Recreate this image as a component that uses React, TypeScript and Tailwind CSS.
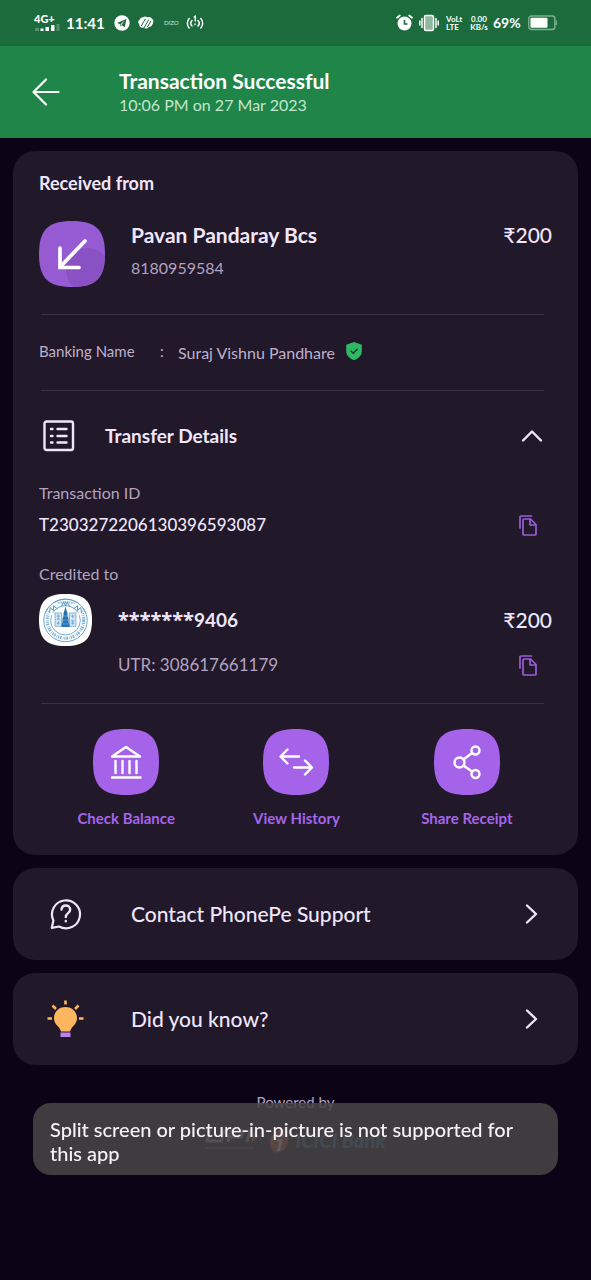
import { useState } from "react";
import type { ReactNode } from "react";

const stroke = {
  fill: "none",
  stroke: "currentColor",
  strokeLinecap: "round",
  strokeLinejoin: "round",
} as const;

const SQUIRCLE = "M33 0C57 0 66 9 66 33S57 66 33 66 0 57 0 33 9 0 33 0Z";

function StatusBar() {
  return (
    <div className="flex h-[46px] items-center justify-between bg-[#1b6b3c] pl-[34px] pr-[34px] text-white">
      <div className="flex items-center">
        <div className="flex w-8 flex-col">
          <span className="text-[11px] font-black leading-[10px]">4G+</span>
          <svg width="27" height="8" viewBox="0 0 27 8" fill="currentColor" aria-hidden="true">
            <path d="M1 4h4v3H1zM22.500 0h3v7h-3z" opacity=".25" />
            <path d="M6.500 4.500h3V7h-3zM11.500 3h3.500V7h-3.500zM17 1h3.500V7H17z" />
          </svg>
        </div>
        <span className="w-12 text-[15px] font-bold leading-6">11:41</span>
        <svg width="16" height="16" viewBox="0 0 16 16" aria-hidden="true">
          <circle cx="8" cy="8" r="7.700" fill="#fff" />
          <path d="M3 8 12.300 4.100 10.800 12.300 7.900 10.200 6.500 11.600 6.300 9.200Z" fill="#1b6b3c" />
          <path d="m6.500 9.200 4-3.500-3 4.200Z" fill="#fff" />
        </svg>
        <svg className="ml-2" width="16" height="14" viewBox="0 0 16 14" aria-hidden="true">
          <path
            d="M5 1.300c1.600-1.200 3.300-.8 4 .2 1.800-.9 4-.5 5 1.300 1.600.6 1.600 2.900 1 4-.5 2.600-1.900 4.200-4.100 4.200-1.500 2-4.200 1.900-5.300.6C3.200 12.300.900 11 1.500 8.500-.4 7 0 4.500 1.600 4 2 2.300 3.500 1.200 5 1.300Z"
            fill="#fff"
          />
          <path d="m3.500 9.500 3.700-6.300M6 12 10.500 4M9.500 11l3.300-5.800" stroke="#1b6b3c" strokeWidth="1" strokeLinecap="round" />
        </svg>
        <span className="ml-2.5 w-[22px] text-[6px] leading-3 opacity-80">DIZO</span>
        <svg width="18" height="16" viewBox="0 0 18 16" aria-hidden="true" {...stroke} strokeWidth="1.500">
          <path d="M3.200 3.500a7 7 0 0 0 0 9.500M14.800 3.500a7 7 0 0 1 0 9.500M6 5.500a4 4 0 0 0 0 5.500M12 5.500a4 4 0 0 1 0 5.500M8.300 2 9.300 1v5M9 9v.5" />
        </svg>
      </div>
      <div className="flex items-center">
        <svg width="17" height="18" viewBox="0 0 17 18" aria-hidden="true">
          <circle cx="8.500" cy="9.500" r="7" fill="#fff" />
          <path d="M1 3.800 3.800 1.500M16 3.800l-2.800-2.300" stroke="#fff" strokeWidth="1.800" strokeLinecap="round" />
          <path d="M8.500 5.800v4.200h3" fill="none" stroke="#1b6b3c" strokeWidth="1.600" />
        </svg>
        <svg className="ml-1.5" width="20" height="18" viewBox="0 0 20 18" aria-hidden="true" {...stroke} strokeWidth="1.500">
          <rect x="5.500" y="1.500" width="9" height="15" rx="1.500" fill="#8fb99e" />
          <path d="M3 4.500v9M17 4.500v9M.8 7v4M19.200 7v4" />
        </svg>
        <span className="ml-[7px] flex w-5 flex-col text-[8px] font-bold leading-[8px]">
          <span>VoLt</span>
          <span>LTE</span>
        </span>
        <span className="ml-0.5 flex w-[22px] flex-col text-center text-[8px] font-bold leading-[8px]">
          <span>0.00</span>
          <span>KB/s</span>
        </span>
        <span className="ml-[3px] w-8 text-sm font-bold leading-6">69%</span>
        <svg className="ml-[3px]" width="29" height="16" viewBox="0 0 29 16" aria-hidden="true">
          <rect x=".8" y="1" width="26" height="13.500" rx="2.500" fill="none" stroke="#7fae90" strokeWidth="1.400" />
          <path d="M28.300 5.500v4.500" stroke="#7fae90" strokeWidth="1.400" />
          <rect x="2.500" y="2.800" width="17" height="10" rx="1" fill="#fff" />
        </svg>
      </div>
    </div>
  );
}

function Divider() {
  return <hr className="ml-0.5 mr-2 h-px border-0 bg-[#3a3142]" />;
}

function CopyButton({ label }: { label: string }) {
  return (
    <button type="button" aria-label={label} className="mr-[15px] text-[#9a5ed6]">
      <svg width="18" height="21" viewBox="0 0 18 21" aria-hidden="true" {...stroke} strokeWidth="1.700">
        <path d="M1 13V2a1 1 0 0 1 1-1h10.500" />
        <path d="M5 4h6.500l5.500 5.500V19a1 1 0 0 1-1 1H5a1 1 0 0 1-1-1V5a1 1 0 0 1 1-1Z" />
        <path d="M11 4.500V10h5.500" />
      </svg>
    </button>
  );
}

function BankLogo() {
  return (
    <svg width="53" height="52" viewBox="0 0 66 66" preserveAspectRatio="none" role="img" aria-label="Bank emblem" className="shrink-0">
      <path d={SQUIRCLE} fill="#fff" />
      <g fill="none" stroke="#5497c6">
        <circle cx="33" cy="33.500" r="27" strokeWidth="1.100" />
        <circle cx="33" cy="33.500" r="18.500" strokeWidth="1" />
        <circle cx="33" cy="33.500" r="22.700" strokeWidth="4" strokeDasharray="1.500 1.300 .7 1.600 2 1" strokeDashoffset="-3" pathLength="142" opacity=".75" />
      </g>
      <g fill="#fff">
        <path d="M12 12h42v15H12z" opacity=".85" />
      </g>
      <path d="M33 6.500A27 27 0 0 1 58 24M33 6.500A27 27 0 0 0 8 24M17 24a18.500 18.500 0 0 1 32 0" fill="none" stroke="#5497c6" />
      <path d="M28 16l2.500-6L33 15l2.500-5 2.500 6M13 24l1-7 4 4 0-6 5 4M53 24l-1-7-4 4 0-6-5 4" fill="none" stroke="#4b91c3" strokeWidth="1.200" />
      <path d="M20 24h8v17h-8zM38 24h8v17h-8z" fill="#d7e8f4" stroke="#5c9dca" strokeWidth=".9" />
      <path d="M22 28h4M22 32h4M24 26v6M22 37h4M24 34v5M40 28h4M42 26v5M40 34h4M40 37h4M42 34v5" stroke="#5c9dca" strokeWidth="1" />
      <path d="M33 15.500 34 20l1.500 4v4l1.300 3v5l1.200 3v3H28v-3l1.200-3v-5l1.300-3v-4L32 20Z" fill="#2573b5" />
      <path d="M29 28h8M29 33h8M29 38h8" stroke="#7fb3da" strokeWidth=".8" />
    </svg>
  );
}

function Action({ label, children }: { label: string; children: ReactNode }) {
  return (
    <button type="button" className="flex flex-col items-center text-[#a565e8]">
      <svg width="66" height="66" viewBox="0 0 66 66" aria-hidden="true">
        <path d={SQUIRCLE} fill="#a463e9" />
        <g fill="none" stroke="#fff" strokeWidth="2.400" strokeLinecap="round" strokeLinejoin="round">
          {children}
        </g>
      </svg>
      <span className="mt-[11px] text-[15px] font-bold leading-6">{label}</span>
    </button>
  );
}

function LinkCard({ label, icon }: { label: string; icon: ReactNode }) {
  return (
    <button type="button" className="flex h-[92px] w-full items-center rounded-[22px] bg-[#21182a] pl-[33px] pr-10 text-left text-[#f0e6fa]">
      <span className="flex w-[85px] shrink-0 items-center">{icon}</span>
      <span className="grow text-[21px] font-medium leading-7">{label}</span>
      <svg width="13" height="20" viewBox="0 0 13 20" aria-hidden="true" {...stroke} strokeWidth="2.400">
        <path d="m2 1.500 9 8.500-9 8.500" />
      </svg>
    </button>
  );
}

export default function App() {
  const [open, setOpen] = useState(true);

  return (
    <div className="min-h-screen bg-[#0d0317] font-['Lato','Noto_Sans',sans-serif] text-[#f0e6fa]">
      <StatusBar />
      <header className="flex h-[92px] items-center bg-[#1f8549] pl-8 text-white">
        <button type="button" aria-label="Back" className="w-[87px] shrink-0">
          <svg width="28" height="28" viewBox="0 0 28 28" aria-hidden="true" {...stroke} strokeWidth="2.200">
            <path d="M14 1.500 1.500 14 14 26.500M1.500 14h25" />
          </svg>
        </button>
        <div className="pt-0.5">
          <h1 className="text-[21px] font-bold leading-6">Transaction Successful</h1>
          <p className="text-base leading-6 text-[#c3e5cf]">10:06 PM on 27 Mar 2023</p>
        </div>
      </header>

      <main className="flex flex-col gap-[13px] px-[13px] pt-[13px]">
        <section className="rounded-[22px] bg-[#21182a] px-[26px] pb-[25px] pt-5">
          <h2 className="text-lg font-bold leading-6">Received from</h2>
          <div className="mb-[27px] mt-[26px] flex">
            <svg width="66" height="66" viewBox="0 0 66 66" aria-hidden="true" className="shrink-0">
              <clipPath id="avatar">
                <path d={SQUIRCLE} />
              </clipPath>
              <path d={SQUIRCLE} fill="#965bd2" />
              <circle cx="49" cy="49" r="22" fill="#8a51c4" clipPath="url(#avatar)" />
              <path d="M46 20 21 46M21 27v19.500h19" fill="none" stroke="#fff" strokeWidth="3.700" strokeLinecap="round" />
            </svg>
            <div className="ml-[26px] grow">
              <p className="text-[21px] font-bold leading-7">Pavan Pandaray Bcs</p>
              <p className="mt-[7px] text-base leading-6 text-[#b3a3c0]">8180959584</p>
            </div>
            <p className="text-[21px] font-medium leading-7">₹200</p>
          </div>
          <Divider />
          <div className="flex h-[75px] items-center pb-1 text-[15px] leading-6 text-[#bfb0cb]">
            <span className="w-[121px]">Banking Name</span>
            <span className="w-[18px]">:</span>
            <span className="pt-1 text-base leading-6">Suraj Vishnu Pandhare</span>
            <svg className="ml-2.5" width="18" height="20" viewBox="0 0 18 20" role="img" aria-label="Verified">
              <path d="M9 1 16.800 3.800V10c0 4.500-3.300 7.700-7.800 9.300C4.500 17.700 1.200 14.500 1.200 10V3.800Z" fill="#2fb863" />
              <path d="m5.700 9.800 2.500 2.500 4.300-4.400" fill="none" stroke="#173a2b" strokeWidth="1.500" />
            </svg>
          </div>
          <Divider />
          <button
            type="button"
            aria-expanded={open}
            onClick={() => setOpen(!open)}
            className="flex h-[90px] w-full items-center pl-1 pr-[9px] text-left"
          >
            <svg width="32" height="32" viewBox="0 0 32 32" aria-hidden="true" {...stroke} strokeWidth="2.400">
              <rect x="1.500" y="1.500" width="28.500" height="28.500" rx="2" />
              <path d="M14.500 9h9M14.500 16h9M14.500 22.500h9M8 9h1.500M8 16h1.500M8 22.500h1.500" />
            </svg>
            <span className="ml-[30px] grow text-[19px] font-bold leading-6">Transfer Details</span>
            <svg className={open ? "" : "rotate-180"} width="22" height="14" viewBox="0 0 22 14" aria-hidden="true" {...stroke} strokeWidth="2.400">
              <path d="m2 11.500 9-9 9 9" />
            </svg>
          </button>
          {open && (
            <div className="pb-[26px]">
              <p className="text-base leading-6 text-[#b3a3c0]">Transaction ID</p>
              <div className="mt-2 flex h-6 items-center justify-between">
                <p className="text-[17px] font-medium leading-6">T2303272206130396593087</p>
                <CopyButton label="Copy transaction ID" />
              </div>
              <p className="mt-[25px] text-base leading-6 text-[#b3a3c0]">Credited to</p>
              <div className="mt-2 flex items-center">
                <BankLogo />
                <p className="ml-[26px] grow text-[19px] font-bold leading-6">
                  <span className="font-['Noto_Sans',sans-serif] text-xl leading-6">*******</span>9406
                </p>
                <p className="text-[21px] font-medium leading-7">₹200</p>
              </div>
              <div className="mt-[7px] flex h-6 items-center justify-between pl-[79px]">
                <p className="text-[17px] leading-6 text-[#b3a3c0]">UTR: 308617661179</p>
                <CopyButton label="Copy UTR" />
              </div>
            </div>
          )}
          <Divider />
          <div className="mt-[25px] grid grid-cols-3 pl-0.5">
            <Action label="Check Balance">
              <path d="M19 27.500 33 18l14 9.500ZM22.500 32v12M29.500 32v12M36.500 32v12M43.500 32v12M19 48.500h28.500" />
            </Action>
            <Action label="View History">
              <path d="M36 27.500H18M24.500 20.500 17.500 27.500l7 7M31 38.500h17.500M42 31.500l7 7-7 7" />
            </Action>
            <Action label="Share Receipt">
              <circle cx="25.500" cy="33.500" r="5" />
              <circle cx="41.500" cy="21.500" r="4" />
              <circle cx="41.500" cy="45" r="4" />
              <path d="m29.500 30.500 8.500-6.500M29.500 36.500l8.500 6" />
            </Action>
          </div>
        </section>

        <LinkCard
          label="Contact PhonePe Support"
          icon={
            <svg className="ml-1" width="32" height="32" viewBox="0 0 32 32" aria-hidden="true" {...stroke} strokeWidth="2.200">
              <path d="M1.800 29.800 3.400 22.500A14 14 0 1 1 9 28.500Z" />
              <path d="M11.500 11.500c.3-2.700 2-4 4.300-4 2.500 0 4.400 1.700 4.400 4.100 0 3.600-4.400 3.500-4.400 7.400M15.800 23v.3" strokeWidth="2.400" />
            </svg>
          }
        />
        <LinkCard
          label="Did you know?"
          icon={
            <svg width="40" height="40" viewBox="0 0 40 40" aria-hidden="true">
              <path d="M19.500 8C26 8 31 12.800 31 19c0 4.500-2.500 7-5 9.500-1 1.200-1.500 2.500-2 4h-9c-.5-1.500-1-2.800-2-4-2.500-2.500-5-5-5-9.500C8 12.800 13 8 19.500 8Z" fill="#ffb75f" />
              <path d="M19.500 1.500v4M6.500 6.500l3.500 3.500M32.500 6.500 29 10M1.500 19.500H6M33 19.500h4.500" stroke="#ffb75f" strokeWidth="2.600" />
              <path d="M14.500 33.500h10v4.500h-10z" fill="#bd83ea" />
            </svg>
          }
        />
      </main>

      <footer className="flex flex-col items-center pb-24 pt-[25px]">
        <p className="text-[15px] leading-6 text-[#b3a3c0]">Powered by</p>
        <div className="mt-3 flex h-7 items-center gap-1.5">
          <svg width="58" height="24" viewBox="0 0 58 24" role="img" aria-label="UPI">
            <g fill="none" stroke="#a9a3ad" strokeWidth="3">
              <path d="M5 2 2 13h14L19 2M23 14l3-11h12l-2 6H25M42 14l3-12" />
            </g>
            <path d="m49 2 5 6-8 7Z" fill="#d98634" />
            <path d="M1 20h48" stroke="#8b848f" strokeDasharray="3 1" />
          </svg>
          <svg width="20" height="28" viewBox="0 0 20 28" aria-hidden="true">
            <path d="M16 2C6 3 0 11 1 19c.5 5 4 8 8 7.500 7-1 11-8 10-15C18.500 7 17 4 16 2Z" fill="#c8442a" />
            <path d="M15 3C6 6 2 13 4 22 0 14 4 5 15 3Z" fill="#f49a3a" />
            <path d="M11 8h4l-1 3h-4zM8 13h6l-3 12H8l2-9H8Z" fill="#fff" />
          </svg>
          <span className="text-xl font-black italic leading-6 text-[#217496]">ICICI Bank</span>
        </div>
      </footer>

      <div role="status" className="fixed inset-x-[33px] bottom-[105px] rounded-[18px] bg-[#474447]/88 px-[17px] pb-2.5 pt-3.5 text-xl font-medium leading-6 text-[#f5f3f6]">
        Split screen or picture-in-picture is not supported for this app
      </div>
    </div>
  );
}
